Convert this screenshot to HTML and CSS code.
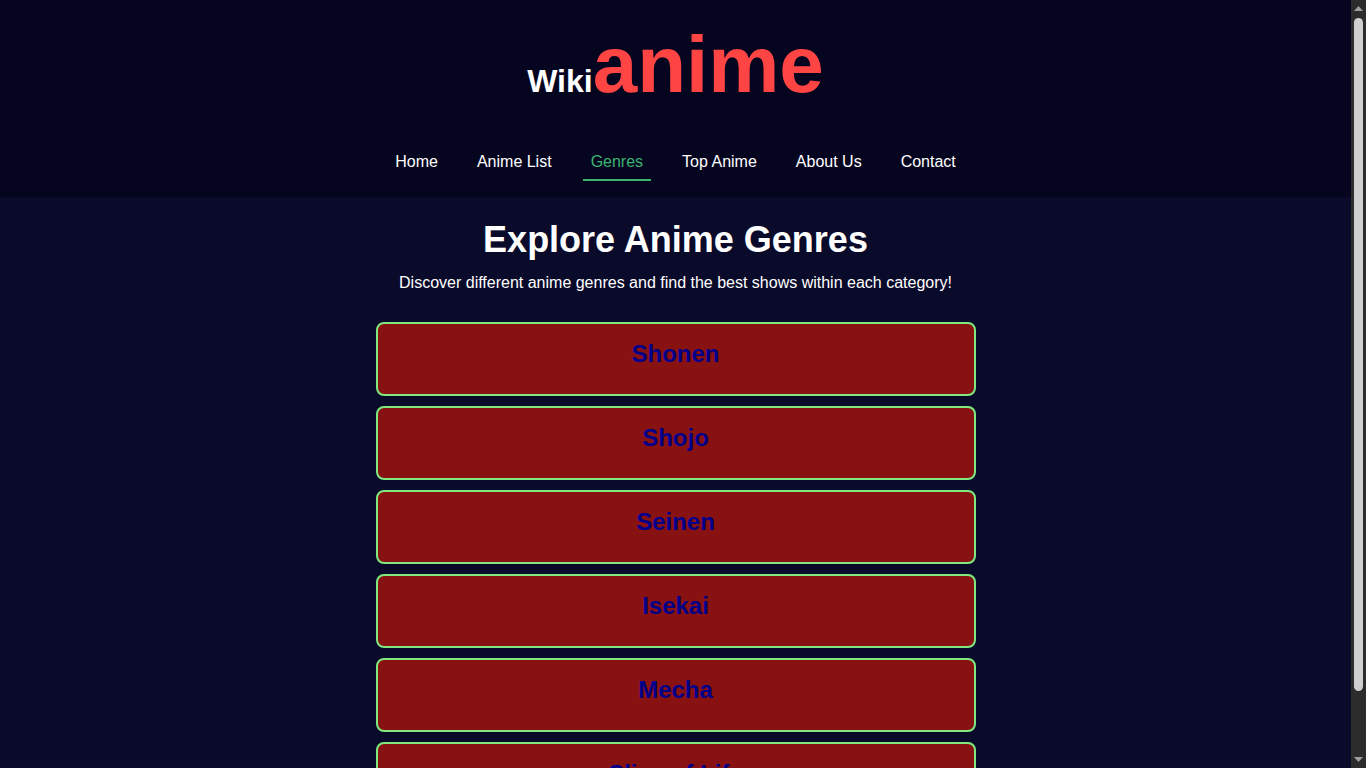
FILE: index.html
```html
<!DOCTYPE html>
<html lang="en">
<head>
<meta charset="utf-8">
<meta name="viewport" content="width=device-width, initial-scale=1">
<title>Wikianime - Genres</title>
<link rel="stylesheet" href="styles.css">
</head>
<body>
<div class="page">
  <header class="header">
    <div class="logo">Wiki<span class="logo-accent">anime</span></div>
    <nav class="nav" aria-label="Main">
      <a href="#home">Home</a>
      <a href="#list">Anime List</a>
      <a href="#genres" class="active" aria-current="page">Genres</a>
      <a href="#top">Top Anime</a>
      <a href="#about">About Us</a>
      <a href="#contact">Contact</a>
    </nav>
  </header>
  <main class="main">
    <h1>Explore Anime Genres</h1>
    <p class="intro">Discover different anime genres and find the best shows within each category!</p>
    <ul class="genres">
      <li><h2>Shonen</h2></li>
      <li><h2>Shojo</h2></li>
      <li><h2>Seinen</h2></li>
      <li><h2>Isekai</h2></li>
      <li><h2>Mecha</h2></li>
      <li><h2>Slice of Life</h2></li>
    </ul>
  </main>
</div>
<div class="scrollbar" aria-hidden="true">
  <svg width="9" height="5" viewBox="0 0 9 5"><path d="M4.5 0 9 5H0z"/></svg>
  <div class="track"><div class="thumb"></div></div>
  <svg width="9" height="5" viewBox="0 0 9 5"><path d="M0 0h9L4.5 5z"/></svg>
</div>
</body>
</html>
```
FILE: styles.css
```css
* {
  box-sizing: border-box;
}

body {
  display: flex;
  height: 100vh;
  margin: 0;
  overflow: hidden;
  background: #0a0a2a;
  color: #fff;
  font-family: "Liberation Sans", Arial, sans-serif;
  font-size: 16px;
}

h1,
h2,
p,
ul {
  margin: 0;
  padding: 0;
}

.page {
  flex: 1;
  min-width: 0;
  overflow: hidden;
  text-align: center;
}

.header {
  padding: 20px 20px 16px;
  background: #050520;
}

.logo {
  font-size: 32px;
  font-weight: bold;
  line-height: 90px;
}

.logo-accent {
  color: #ff4444;
  font-size: 80px;
}

.nav {
  display: flex;
  flex-wrap: wrap;
  justify-content: center;
  gap: 23px;
  padding-top: 19px;
}

.nav a {
  padding: 8px;
  border-bottom: 2px solid transparent;
  color: #fff;
  line-height: 18px;
  text-decoration: none;
}

.nav .active {
  border-color: #3cb371;
  color: #3cb371;
}

.main {
  padding: 20px;
}

h1 {
  font-size: 36px;
  line-height: 46px;
}

.intro {
  padding-top: 10px;
  line-height: 20px;
}

.genres {
  display: grid;
  gap: 10px;
  max-width: 600px;
  margin: 29px auto 0;
  list-style: none;
}

.genres li {
  padding: 16px 16px 26px;
  border: 2px solid #7fe87f;
  border-radius: 8px;
  background: #881212;
}

.genres h2 {
  color: #00008b;
  font-size: 24px;
  line-height: 28px;
}

.scrollbar {
  display: flex;
  flex-direction: column;
  align-items: center;
  width: 15px;
  padding: 6px 0;
  background: #2c2c2c;
}

.scrollbar svg {
  fill: #9f9f9f;
}

.track {
  flex: 1;
  padding: 7px 0;
}

.thumb {
  width: 9px;
  height: 92%;
  border-radius: 5px;
  background: #cfcfcf;
}
```
